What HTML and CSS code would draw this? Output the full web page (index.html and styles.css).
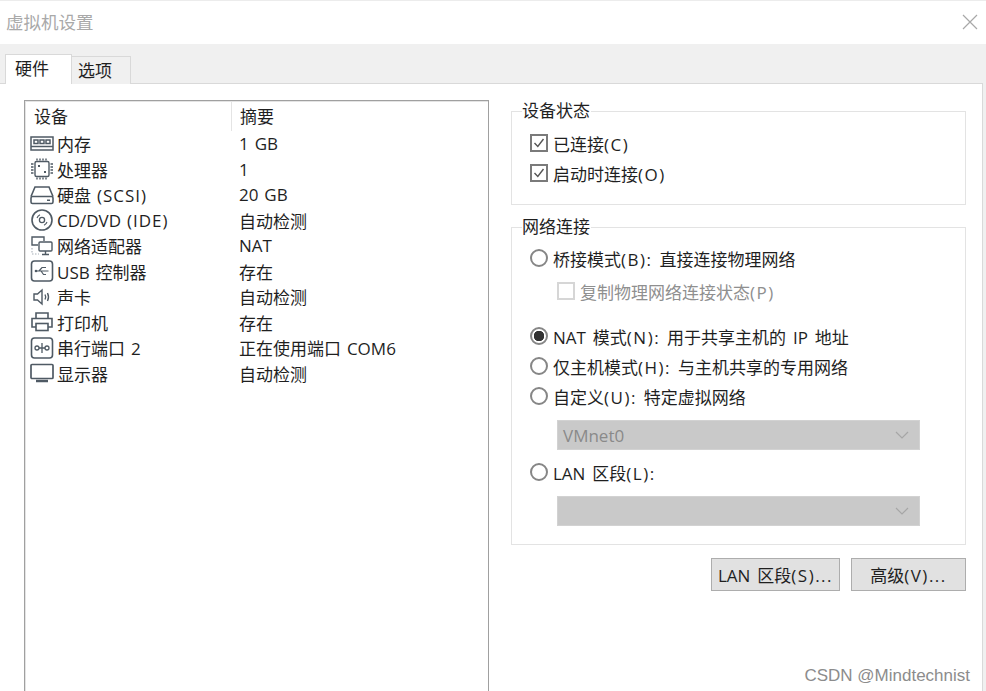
FILE: index.html
```html
<!DOCTYPE html>
<html lang="zh-CN">
<head>
  <meta charset="UTF-8" />
  <meta name="viewport" content="width=device-width, initial-scale=1.0"/>
  <title>虚拟机设置</title>
  <link rel="stylesheet" href="styles.css">
</head>
<body>

<div class="titlebar">
  <span class="title">虚拟机设置</span>
  <svg class="close" width="16" height="16" viewBox="0 0 16 16"><path d="M1 1L15 15M15 1L1 15" stroke="#a8a8a8" stroke-width="1.2" fill="none"/></svg>
</div>

<div class="tabs">
  <div class="tab active">硬件</div>
  <div class="tab">选项</div>
</div>

<div class="panel">
  <div class="list">
    <div class="list-head">
      <div class="col-a">设备</div>
      <div class="col-b">摘要</div>
    </div>

    <div class="row">
      <svg class="icon" width="24" height="20" viewBox="0 0 24 20"><g fill="none" stroke="#4f5a64" stroke-width="1.5"><rect x="1" y="3" width="22" height="13"/><path d="M1 12.5H23"/><rect x="4" y="6" width="4" height="3.5"/><rect x="10" y="6" width="4" height="3.5"/><rect x="16" y="6" width="4" height="3.5"/></g></svg>
      <span class="name">内存</span><span class="val">1 GB</span>
    </div>
    <div class="row">
      <svg class="icon" width="24" height="22" viewBox="0 0 24 22"><g fill="none" stroke="#4f5a64" stroke-width="1.4"><rect x="5" y="3.5" width="14" height="15" rx="1.5"/><path d="M7 0.5V2.5M10 0.5V2.5M13 0.5V2.5M16 0.5V2.5M7 19.5V21.5M10 19.5V21.5M13 19.5V21.5M16 19.5V21.5M1 6H3.5M1 9H3.5M1 12H3.5M1 15H3.5M20.5 6H23M20.5 9H23M20.5 12H23M20.5 15H23"/></g><rect x="8" y="7" width="2" height="2" fill="#4f5a64"/><rect x="14" y="13" width="2" height="2" fill="#4f5a64"/></svg>
      <span class="name">处理器</span><span class="val">1</span>
    </div>
    <div class="row">
      <svg class="icon" width="24" height="20" viewBox="0 0 24 20"><g fill="none" stroke="#4f5a64" stroke-width="1.6"><path d="M1 11.5L5 2H19L23 11.5"/><rect x="1" y="11.5" width="22" height="7" rx="1.5"/></g><rect x="17" y="14.5" width="3" height="1.5" fill="#4f5a64"/></svg>
      <span class="name">硬盘 <span class="key">(SCSI)</span></span><span class="val">20 GB</span>
    </div>
    <div class="row">
      <svg class="icon" width="24" height="22" viewBox="0 0 24 22"><g fill="none" stroke="#4f5a64"><circle cx="12" cy="11" r="10" stroke-width="1.6"/><circle cx="12" cy="11" r="2.6" stroke-width="1.3"/><path d="M7 9A5.5 5.5 0 0 1 10 5.8M17 13A5.5 5.5 0 0 1 14 16.2" stroke-width="1.1"/></g></svg>
      <span class="name">CD/DVD <span class="key">(IDE)</span></span><span class="val">自动检测</span>
    </div>
    <div class="row">
      <svg class="icon" width="24" height="22" viewBox="0 0 24 22"><g fill="none" stroke="#4f5a64" stroke-width="1.4"><path d="M8 10H2V2H14V6"/><rect x="9" y="7" width="13" height="9" rx="1"/><path d="M15.5 16V19M12 19.5H19"/></g><path d="M2 13V19H9" fill="none" stroke="#a8b0b8" stroke-width="1.1" stroke-dasharray="1.5 1.5"/></svg>
      <span class="name">网络适配器</span><span class="val">NAT</span>
    </div>
    <div class="row">
      <svg class="icon" width="24" height="22" viewBox="0 0 24 22"><g fill="none" stroke="#4f5a64"><rect x="1.5" y="1" width="21" height="20" rx="3" stroke-width="1.6"/><path d="M5.5 11H18.5M9 11L12 7.5H16M11 11L13.5 14.5H16" stroke-width="1.2"/></g><circle cx="6" cy="11" r="1.3" fill="#4f5a64"/></svg>
      <span class="name">USB 控制器</span><span class="val">存在</span>
    </div>
    <div class="row">
      <svg class="icon" width="24" height="20" viewBox="0 0 24 20"><g fill="none" stroke="#4f5a64" stroke-width="1.4"><path d="M4 7H7.5L12 3V17L7.5 13H4Z"/><path d="M15 7.5Q16.5 10 15 12.5M17.5 6Q19.5 10 17.5 14"/></g></svg>
      <span class="name">声卡</span><span class="val">自动检测</span>
    </div>
    <div class="row">
      <svg class="icon" width="24" height="22" viewBox="0 0 24 22"><g fill="none" stroke="#4f5a64" stroke-width="1.6"><path d="M6 7V2H18V7"/><path d="M6 16H2V7.5H22V16H18"/><rect x="6" y="12.5" width="12" height="7"/></g></svg>
      <span class="name">打印机</span><span class="val">存在</span>
    </div>
    <div class="row">
      <svg class="icon" width="24" height="22" viewBox="0 0 24 22"><g fill="none" stroke="#4f5a64"><rect x="1.5" y="1" width="21" height="20" rx="3" stroke-width="1.6"/><circle cx="7" cy="11" r="2" stroke-width="1.3"/><circle cx="17" cy="11" r="2" stroke-width="1.3"/><path d="M12 6V16M9 11H15" stroke-width="1.3"/></g></svg>
      <span class="name">串行端口 2</span><span class="val">正在使用端口 COM6</span>
    </div>
    <div class="row">
      <svg class="icon" width="24" height="20" viewBox="0 0 24 20"><rect x="1" y="1.5" width="22" height="14" rx="1" fill="none" stroke="#4f5a64" stroke-width="1.7"/><path d="M6 18H18" stroke="#4f5a64" stroke-width="2.5"/></svg>
      <span class="name">显示器</span><span class="val">自动检测</span>
    </div>
  </div>

  <div class="side">
    <fieldset class="group status">
      <legend>设备状态</legend>
      <div class="opt">
        <span class="check"><svg width="14" height="14" viewBox="0 0 14 14"><path d="M2.5 7L5.8 10.5L11.5 3" fill="none" stroke="#555" stroke-width="1.4"/></svg></span>
        <span>已连接<span class="key">(C)</span></span>
      </div>
      <div class="opt">
        <span class="check"><svg width="14" height="14" viewBox="0 0 14 14"><path d="M2.5 7L5.8 10.5L11.5 3" fill="none" stroke="#555" stroke-width="1.4"/></svg></span>
        <span>启动时连接<span class="key">(O)</span></span>
      </div>
    </fieldset>

    <fieldset class="group network">
      <legend>网络连接</legend>
      <div class="opt"><span class="radio"></span><span>桥接模式<span class="key">(B):</span> 直接连接物理网络</span></div>
      <div class="opt sub disabled"><span class="check off"></span><span>复制物理网络连接状态<span class="key">(P)</span></span></div>
      <div class="opt"><span class="radio on"></span><span>NAT 模式<span class="key">(N):</span> 用于共享主机的 IP 地址</span></div>
      <div class="opt"><span class="radio"></span><span>仅主机模式<span class="key">(H):</span> 与主机共享的专用网络</span></div>
      <div class="opt"><span class="radio"></span><span>自定义<span class="key">(U):</span> 特定虚拟网络</span></div>
      <div class="select">
        <span>VMnet0</span>
        <svg width="14" height="8" viewBox="0 0 14 8"><path d="M1 1L7 7L13 1" fill="none" stroke="#a6a6a6" stroke-width="1.2"/></svg>
      </div>
      <div class="opt"><span class="radio"></span><span>LAN 区段<span class="key">(L):</span></span></div>
      <div class="select">
        <span></span>
        <svg width="14" height="8" viewBox="0 0 14 8"><path d="M1 1L7 7L13 1" fill="none" stroke="#a6a6a6" stroke-width="1.2"/></svg>
      </div>
    </fieldset>

    <div class="buttons">
      <button class="btn lan-btn">LAN 区段<span class="key">(S)...</span></button>
      <button class="btn adv-btn">高级<span class="key">(V)...</span></button>
    </div>
  </div>
</div>

<div class="mark">CSDN @Mindtechnist</div>

</body>
</html>
```

FILE: styles.css
```css
* {
  box-sizing: border-box;
}
html, body {
  height: 100%;
}
body {
  margin: 0;
  display: flex;
  flex-direction: column;
  overflow: hidden;
  position: relative;
  background: #f0f0f0;
  color: #1f1f1f;
  font-family: "Open Sans", "Noto Sans CJK SC", sans-serif;
  font-size: 17px;
}
.titlebar {
  height: 44px;
  flex: none;
  display: flex;
  align-items: center;
  justify-content: space-between;
  padding: 0 8px 2px 6px;
  background: #fff;
  border-top: 1px solid #ececec;
}
.title {
  color: #a9a9a9;
  font-size: 17.5px;
}
.tabs {
  height: 40px;
  flex: none;
  display: flex;
  align-items: flex-end;
  padding-left: 5px;
  margin-bottom: -1px;
  position: relative;
}
.tab {
  width: 59px;
  height: 28px;
  padding-left: 6px;
  line-height: 27px;
  background: #f0f0f0;
  border: 1px solid #d9d9d9;
  border-bottom: none;
  border-left: none;
}
.tab.active {
  width: 67px;
  height: 30px;
  padding-left: 9px;
  background: #fff;
  border-left: 1px solid #d9d9d9;
}
.panel {
  flex: 1;
  min-height: 0;
  display: flex;
  margin-right: 3px;
  padding: 16px 16px 0 24px;
  background: #fff;
  border: 1px solid #d9d9d9;
  border-left: none;
  border-bottom: none;
}
.list {
  width: 465px;
  flex: none;
  border: 1px solid #a0a0a0;
  border-bottom: none;
  box-shadow: inset 1px 1px 0 #e4e4e4;
}
.list-head {
  height: 30px;
  display: flex;
  line-height: 32px;
}
.col-a {
  width: 207px;
  padding-left: 9px;
  border-right: 1px solid #e4e4e4;
}
.col-b {
  padding-left: 8px;
}
.row {
  height: 25.5px;
  display: flex;
  align-items: center;
  padding-left: 5px;
  word-spacing: 1.5px;
}
.icon {
  flex: none;
  margin-right: 3px;
}
.name {
  width: 182px;
  white-space: nowrap;
}
.name .key {
  letter-spacing: 1px;
}
.val {
  white-space: nowrap;
}
.side {
  flex: 1;
  margin-left: 22px;
  padding-top: 1px;
  word-spacing: 2.5px;
}
.key {
  letter-spacing: 1.5px;
}
.group {
  margin: 0;
  padding: 0 0 0 18px;
  min-width: 0;
  border: 1px solid #e3e3e3;
}
.group legend {
  padding: 0 1px 0 0;
  margin-left: -8px;
  line-height: 20px;
}
.status {
  height: 104px;
}
.network {
  height: 328px;
  margin-top: 12px;
}
.opt {
  height: 30px;
  display: flex;
  align-items: center;
  white-space: nowrap;
}
.status legend + .opt {
  margin-top: 7px;
}
.network legend + .opt {
  margin-top: 6px;
}
.check {
  width: 18px;
  height: 18px;
  margin-right: 5px;
  flex: none;
  border: 2px solid #7a7a7a;
  background: #fff;
}
.check svg {
  display: block;
}
.check.off {
  border-color: #d6d6d6;
}
.radio {
  width: 18px;
  height: 18px;
  margin-right: 5px;
  flex: none;
  border: 2px solid #868686;
  border-radius: 50%;
  background: #fff;
}
.radio.on {
  background: radial-gradient(circle, #333 0, #333 5px, #fff 5.5px);
}
.sub {
  margin: 3px 0 15px 27px;
}
.disabled {
  color: #8f8f8f;
}
.select {
  width: 363px;
  height: 30px;
  margin: 9px 0 7px 27px;
  padding: 0 10px 0 5px;
  display: flex;
  align-items: center;
  justify-content: space-between;
  background: #c9c9c9;
  color: #8a8a8a;
  border: 1px solid #d2d2d2;
}
.buttons {
  display: flex;
  justify-content: flex-end;
  gap: 11px;
  margin-top: 13px;
}
.btn {
  height: 33px;
  padding: 0;
  background: #e1e1e1;
  border: 1px solid #adadad;
  color: #1f1f1f;
  font: inherit;
  word-spacing: inherit;
  white-space: nowrap;
}
.lan-btn {
  width: 129px;
}
.adv-btn {
  width: 115px;
}
.mark {
  position: absolute;
  right: 16px;
  bottom: 5px;
  color: #8c8c8c;
  font-family: "Liberation Sans", sans-serif;
  font-size: 17px;
}
```
